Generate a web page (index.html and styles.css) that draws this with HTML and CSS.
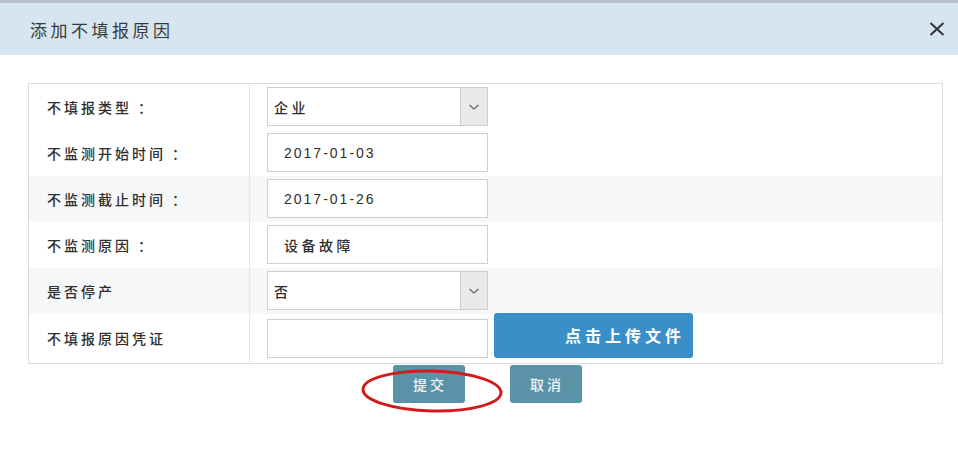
FILE: index.html
```html
<!DOCTYPE html>
<html lang="zh-CN">
<head>
<meta charset="utf-8">
<title>添加不填报原因</title>
<link rel="stylesheet" href="styles.css">
</head>
<body>
<div class="modal">
  <div class="modal-header">
    <span class="modal-title">添加不填报原因</span>
    <span class="close" aria-label="关闭">
      <svg width="16" height="14" viewBox="0 0 16 14"><path d="M1.5 1 L14.5 13 M14.5 1 L1.5 13" stroke="#333" stroke-width="2" fill="none"/></svg>
    </span>
  </div>
  <div class="modal-body">
    <table class="form-table">
      <tr>
        <td class="label">不填报类型<span class="colon">：</span></td>
        <td class="field"><div class="select"><span class="sel-text">企业</span><span class="sel-arrow"><svg width="12" height="8" viewBox="0 0 12 8"><path d="M1.5 2 L6 6 L10.5 2" stroke="#666" stroke-width="1.3" fill="none"/></svg></span></div></td>
      </tr>
      <tr>
        <td class="label">不监测开始时间<span class="colon">：</span></td>
        <td class="field"><div class="input num">2017-01-03</div></td>
      </tr>
      <tr class="shaded">
        <td class="label">不监测截止时间<span class="colon">：</span></td>
        <td class="field"><div class="input num">2017-01-26</div></td>
      </tr>
      <tr>
        <td class="label">不监测原因<span class="colon">：</span></td>
        <td class="field"><div class="input">设备故障</div></td>
      </tr>
      <tr class="shaded">
        <td class="label">是否停产</td>
        <td class="field"><div class="select"><span class="sel-text">否</span><span class="sel-arrow"><svg width="12" height="8" viewBox="0 0 12 8"><path d="M1.5 2 L6 6 L10.5 2" stroke="#666" stroke-width="1.3" fill="none"/></svg></span></div></td>
      </tr>
      <tr class="last">
        <td class="label">不填报原因凭证</td>
        <td class="field"><div class="upload-row"><div class="input"></div><span class="upload-btn">点击上传文件</span></div></td>
      </tr>
    </table>
    <div class="actions">
      <span class="btn">提交</span>
      <span class="btn">取消</span>
      <svg class="mark" width="148" height="50" viewBox="0 0 148 50"><ellipse cx="74" cy="25" rx="69" ry="20" stroke="#d21c1c" stroke-width="3" fill="none" transform="rotate(1.5 74 25)"/></svg>
    </div>
  </div>
</div>
</body>
</html>
```
FILE: styles.css
```css
* { box-sizing: border-box; }
body {
  margin: 0;
  background: #fff;
  font-family: "Liberation Sans", "Noto Sans CJK SC", sans-serif;
  color: #333;
}
.modal { width: 958px; height: 464px; }
.modal-header {
  height: 55px;
  border-top: 3px solid #b9c1c8;
  background: #d6e6f0;
  display: flex;
  align-items: center;
  justify-content: space-between;
  padding: 0 13px 0 30px;
}
.modal-title {
  font-size: 17px;
  letter-spacing: 3.5px;
  color: #3a3a3a;
}
.close { display: flex; align-items: center; }
.modal-body {
  padding: 28px 15px 0 28px;
}
.form-table {
  width: 915px;
  border-collapse: collapse;
  border: 1px solid #dcdcdc;
}
.form-table tr { height: 46px; }
.form-table tr.last { height: 50px; }
.form-table tr.shaded { background: #f6f7f8; }
.label {
  width: 221px;
  padding: 0 0 0 18px;
  border-right: 1px solid #e6e6e6;
  font-size: 14px;
  font-weight: 500;
  letter-spacing: 3px;
  color: #2e2e2e;
}
.colon { margin-left: 6px; }
.field {
  padding: 3px 0 3px 17px;
  vertical-align: middle;
}
.input, .select {
  width: 221px;
  height: 39px;
  border: 1px solid #cfcfcf;
  background: #fff;
  font-size: 14px;
  font-weight: 500;
  letter-spacing: 3.5px;
  color: #2e2e2e;
  display: flex;
  align-items: center;
  padding-left: 16px;
}
.input.num { letter-spacing: 2px; font-size: 14px; font-weight: normal; }
.select { padding-left: 6px; justify-content: space-between; }
.sel-arrow {
  width: 27px;
  height: 37px;
  background: #e9e9e9;
  border-left: 1px solid #cfcfcf;
  display: flex;
  align-items: center;
  justify-content: center;
}
.upload-row {
  display: flex;
  align-items: flex-end;
  gap: 6px;
}
.upload-row .input { flex: none; }
.upload-btn {
  width: 199px;
  height: 45px;
  margin-top: -6px;
  background: #3b8fc9;
  border-radius: 3px;
  color: #fff;
  font-weight: bold;
  font-size: 16px;
  letter-spacing: 4px;
  display: flex;
  align-items: center;
  justify-content: flex-end;
  padding-right: 8px;
}
.actions {
  position: relative;
  display: flex;
  justify-content: center;
  gap: 45px;
  padding: 1px 0 0 3px;
}
.btn {
  width: 72px;
  height: 38px;
  background: #5a93a7;
  border-radius: 3px;
  color: #f2f6f8;
  font-size: 14px;
  font-weight: 500;
  letter-spacing: 3px;
  display: flex;
  align-items: center;
  justify-content: center;
  padding-left: 3px;
}
.mark {
  position: absolute;
  left: 330px;
  top: 2px;
}
```
